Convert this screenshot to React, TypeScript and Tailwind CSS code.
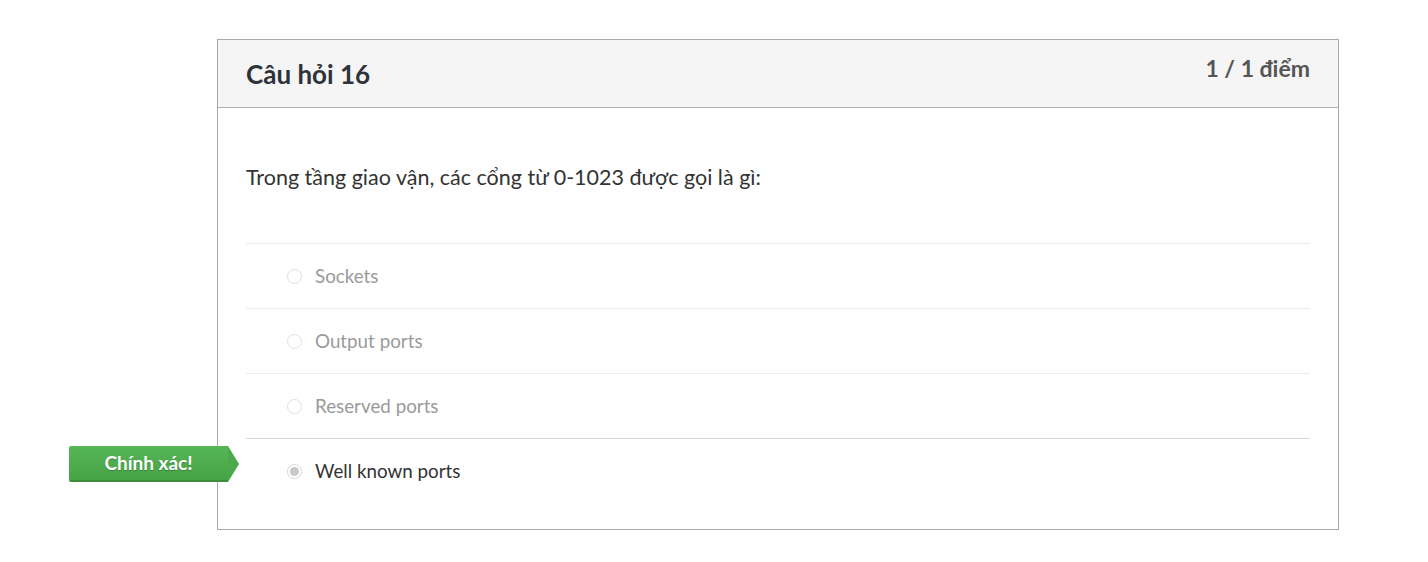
import React from "react";

const options = [
  { label: "Sockets", checked: false },
  { label: "Output ports", checked: false },
  { label: "Reserved ports", checked: false },
  { label: "Well known ports", checked: true },
];

export default function App() {
  return (
    <div className="min-h-[562px] bg-white pt-[39px] font-['Lato','Liberation_Sans',sans-serif]">
      <div className="ml-[217px] w-[1122px] border border-[#a9a9a9] bg-white">
        <div className="flex h-[68px] items-start justify-between border-b border-[#b0b0b0] bg-[#f5f5f5] px-7">
          <div className="mt-[18px] text-[26px] font-bold leading-[32px] text-[#2d3339]">Câu hỏi 16</div>
          <div className="mt-[14px] text-[23px] font-bold leading-[28px] text-[#555555]">1 / 1 điểm</div>
        </div>
        <div className="px-7 pb-[26px] pt-[55px]">
          <div className="text-[21.5px] leading-[28px] text-[#333333]">
            Trong tầng giao vận, các cổng từ 0-1023 được gọi là gì:
          </div>
          <div className="mt-[52px]">
            {options.map((o, i) => (
              <div
                key={o.label}
                className={`relative flex h-[65px] items-center border-t ${i === 3 ? "border-[#d8d8d8]" : "border-[#ececec]"} pl-[41px]`}
              >
                {o.checked && (
                  <div className="absolute left-[-177px] top-[7px] flex">
                    <div className="flex h-[36px] w-[159px] items-center justify-center rounded-l-[2px] border-b-2 border-[#3b8c3b] bg-gradient-to-b from-[#56b656] to-[#46a346] text-[19px] font-bold text-white [text-shadow:0_1px_1px_rgba(0,0,0,0.25)]">
                      Chính xác!
                    </div>
                    <div className="h-0 w-0 border-y-[18px] border-l-[11px] border-y-transparent border-l-[#4aa94a]" />
                  </div>
                )}
                <span
                  className={`flex h-[15px] w-[15px] items-center justify-center rounded-full border ${o.checked ? "border-[#d4d4d4] bg-white" : "border-[#e0e0e0] bg-white"}`}
                >
                  {o.checked && <span className="h-[9px] w-[9px] rounded-full bg-[#c8c8c8]" />}
                </span>
                <span
                  className={`ml-[13px] text-[18.8px] leading-[24px] ${o.checked ? "text-[#333333]" : "text-[#9a9a9a]"}`}
                >
                  {o.label}
                </span>
              </div>
            ))}
          </div>
        </div>
      </div>
    </div>
  );
}
